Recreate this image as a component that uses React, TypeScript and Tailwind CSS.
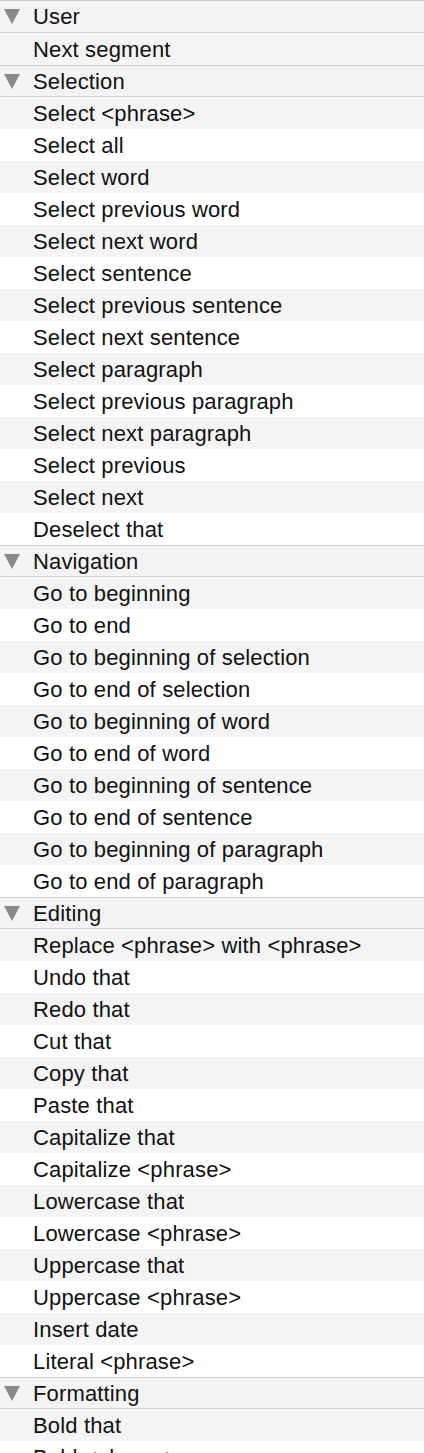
const groups: { title: string; items: string[] }[] = [
  { title: "User", items: ["Next segment"] },
  {
    title: "Selection",
    items: [
      "Select <phrase>",
      "Select all",
      "Select word",
      "Select previous word",
      "Select next word",
      "Select sentence",
      "Select previous sentence",
      "Select next sentence",
      "Select paragraph",
      "Select previous paragraph",
      "Select next paragraph",
      "Select previous",
      "Select next",
      "Deselect that",
    ],
  },
  {
    title: "Navigation",
    items: [
      "Go to beginning",
      "Go to end",
      "Go to beginning of selection",
      "Go to end of selection",
      "Go to beginning of word",
      "Go to end of word",
      "Go to beginning of sentence",
      "Go to end of sentence",
      "Go to beginning of paragraph",
      "Go to end of paragraph",
    ],
  },
  {
    title: "Editing",
    items: [
      "Replace <phrase> with <phrase>",
      "Undo that",
      "Redo that",
      "Cut that",
      "Copy that",
      "Paste that",
      "Capitalize that",
      "Capitalize <phrase>",
      "Lowercase that",
      "Lowercase <phrase>",
      "Uppercase that",
      "Uppercase <phrase>",
      "Insert date",
      "Literal <phrase>",
    ],
  },
  { title: "Formatting", items: ["Bold that", "Bold <phrase>", "Italicize that"] },
];

const Triangle = () => (
  <svg width="16" height="15" viewBox="0 0 16 15" className="shrink-0">
    <polygon points="0,0 16,0 8,15" fill="#8a8a8a" />
  </svg>
);

const Header = ({ title, first }: { title: string; first: boolean }) => (
  <div
    className={
      first
        ? "h-[32px] flex items-center bg-[#f3f3f3] border-b border-[#d2d2d2]"
        : "h-[32px] flex items-center bg-[#f3f3f3] border-y border-[#d2d2d2]"
    }
  >
    <div className="w-[33px] pl-[4px] flex items-center">
      <Triangle />
    </div>
    <span className="pt-px">{title}</span>
  </div>
);

export default function App() {
  return (
    <div
      className="w-[424px] h-[1453px] overflow-hidden bg-white text-[22px] tracking-[0.15px] text-[#111] border-t border-[#c6c6c6] leading-none"
      style={{ fontFamily: '"Liberation Sans", Arial, sans-serif' }}
    >
      {groups.map((g, gi) => (
        <div key={g.title}>
          <Header title={g.title} first={gi === 0} />
          {g.items.map((item, i) => (
            <div
              key={item}
              className={
                i % 2 === 0
                  ? "h-[32px] flex items-center pl-[33px] pt-px bg-[#f4f4f4]"
                  : "h-[32px] flex items-center pl-[33px] pt-px bg-white"
              }
            >
              {item}
            </div>
          ))}
        </div>
      ))}
    </div>
  );
}
